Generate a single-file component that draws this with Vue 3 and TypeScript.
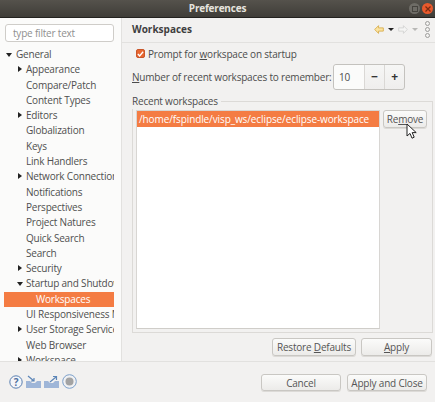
<template>
  <div class="window">
    <header class="titlebar">
      <span class="title">Preferences</span>
      <span class="win-btn max"><i></i></span>
      <span class="win-btn close">
        <svg width="8" height="8" viewBox="0 0 8 8"><path d="M1.5 1.5l5 5M6.5 1.5l-5 5" stroke="#7a2a10" stroke-width="1.2" /></svg>
      </span>
    </header>

    <div class="main">
      <aside class="sidebar">
        <div class="filter">type filter text</div>
        <div class="tree">
          <div
            v-for="item in tree"
            :key="item.label"
            :class="['row', { selected: item.selected }]"
            :style="{ paddingLeft: item.indent + 'px' }"
          >
            <span v-if="item.arrow === 'right'" class="arrow-right"></span>
            <span v-if="item.arrow === 'down'" class="arrow-down"></span>
            {{ item.label }}
          </div>
        </div>
      </aside>

      <section class="content">
        <div class="head">
          <h1>Workspaces</h1>
          <div class="nav">
            <svg width="10" height="9" viewBox="0 0 11 10">
              <path d="M.7 5L5 .7v2.500h5.300v3.600H5v2.500z" fill="#fbe3a0" stroke="#d9ae4c" />
            </svg>
            <span class="caret dark"></span>
            <svg width="10" height="9" viewBox="0 0 11 10">
              <path d="M10.300 5L6 .7v2.500H.7v3.600H6v2.500z" fill="#f4f4f3" stroke="#d4d4d2" />
            </svg>
            <span class="caret"></span>
            <span class="dots"><i></i><i></i><i></i></span>
          </div>
        </div>

        <div class="body">
          <label class="check-row">
            <span class="check">
              <svg width="8" height="8" viewBox="0 0 8 8"><path d="M1 4l2 2.200L7 1.400" fill="none" stroke="#fff" stroke-width="1.500" /></svg>
            </span>
            <span>Prompt for <u>w</u>orkspace on startup</span>
          </label>

          <div class="count-row">
            <span><u>N</u>umber of recent workspaces to remember:</span>
            <div class="spinner">
              <span class="value">10</span>
              <span class="step">−</span>
              <span class="step">+</span>
            </div>
          </div>

          <div class="group">
            <div class="legend">Recent workspaces</div>
            <div class="list">
              <div class="list-item">/home/fspindle/visp_ws/eclipse/eclipse-workspace</div>
            </div>
            <div class="side">
              <button type="button" class="btn remove">Re<u>m</u>ove</button>
              <svg class="cursor" width="12" height="17" viewBox="0 0 12 17">
                <path d="M1 1v12l3-2.600 2 4.800 2.200-1-2-4.600h4z" fill="#fff" stroke="#222" stroke-width="1" />
              </svg>
            </div>
          </div>

          <div class="page-actions">
            <button type="button" class="btn restore">Restore <u>D</u>efaults</button>
            <button type="button" class="btn apply"><u>A</u>pply</button>
          </div>
        </div>
      </section>
    </div>

    <footer class="footer">
      <div class="icons">
        <svg width="14" height="14" viewBox="0 0 14 14">
          <circle cx="7" cy="7" r="6.200" fill="#f4f6fa" stroke="#5a7fb0" />
          <text x="7" y="10.500" text-anchor="middle" class="q">?</text>
        </svg>
        <svg width="15" height="13" viewBox="0 0 15 13">
          <path d="M0 6h4l2 2h3l2-2h4v7H0z" fill="#9fb6d8" />
          <path d="M2 1l6 5M8 3v3H5" fill="none" stroke="#5d86b8" stroke-width="1.200" />
        </svg>
        <svg width="15" height="13" viewBox="0 0 15 13">
          <path d="M0 6h4l2 2h3l2-2h4v7H0z" fill="#9fb6d8" />
          <path d="M6 7l6-5M9 1.500h3.500V5" fill="none" stroke="#5d86b8" stroke-width="1.200" />
        </svg>
        <svg width="15" height="15" viewBox="0 0 15 15">
          <circle cx="7.500" cy="7.500" r="6.800" fill="#f0f1f3" stroke="#7b9fca" />
          <circle cx="7.500" cy="7.500" r="4" fill="#a3a3a3" />
        </svg>
      </div>
      <button type="button" class="btn cancel">Cancel</button>
      <button type="button" class="btn close-btn">Apply and Close</button>
    </footer>
  </div>
</template>

<script setup lang="ts">
type TreeItem = {
  label: string
  indent: number
  arrow?: 'right' | 'down'
  selected?: boolean
}

const tree: TreeItem[] = [
  { label: 'General', indent: 16, arrow: 'down' },
  { label: 'Appearance', indent: 26, arrow: 'right' },
  { label: 'Compare/Patch', indent: 26 },
  { label: 'Content Types', indent: 26 },
  { label: 'Editors', indent: 26, arrow: 'right' },
  { label: 'Globalization', indent: 26 },
  { label: 'Keys', indent: 26 },
  { label: 'Link Handlers', indent: 26 },
  { label: 'Network Connections', indent: 26, arrow: 'right' },
  { label: 'Notifications', indent: 26 },
  { label: 'Perspectives', indent: 26 },
  { label: 'Project Natures', indent: 26 },
  { label: 'Quick Search', indent: 26 },
  { label: 'Search', indent: 26 },
  { label: 'Security', indent: 26, arrow: 'right' },
  { label: 'Startup and Shutdown', indent: 26, arrow: 'down' },
  { label: 'Workspaces', indent: 36, selected: true },
  { label: 'UI Responsiveness Monitoring', indent: 26 },
  { label: 'User Storage Service', indent: 26, arrow: 'right' },
  { label: 'Web Browser', indent: 26 },
  { label: 'Workspace', indent: 26, arrow: 'right' },
]
</script>

<style>
html,
body {
  margin: 0;
  background: #f2f1f0;
}
</style>

<style scoped>
.window {
  width: 435px;
  height: 402px;
  display: flex;
  flex-direction: column;
  overflow: hidden;
  background: #f2f1f0;
  color: #4c4c4c;
  font-family: "Open Sans", "Noto Sans", sans-serif;
  font-size: 10px;
  letter-spacing: -0.2px;
}

.titlebar {
  height: 17px;
  flex: none;
  display: flex;
  align-items: center;
  justify-content: flex-end;
  gap: 2px;
  padding-right: 2px;
  position: relative;
  background: linear-gradient(#55524c, #3f3d38);
  border-bottom: 1px solid #23221f;
}

.title {
  position: absolute;
  left: 0;
  right: 0;
  top: 1px;
  text-align: center;
  color: #e6e4df;
  font-weight: 700;
  font-size: 10px;
}

.win-btn {
  width: 11px;
  height: 11px;
  border-radius: 50%;
  display: flex;
  align-items: center;
  justify-content: center;
  position: relative;
}

.win-btn.max {
  background: #6e6c66;
}

.win-btn.max i {
  width: 4px;
  height: 4px;
  border: 1px solid #45433e;
}

.win-btn.close {
  background: #e9592c;
}

.main {
  flex: 1;
  min-height: 0;
  display: flex;
  border-bottom: 1px solid #e2e1df;
}

.sidebar {
  width: 121px;
  flex: none;
  display: flex;
  flex-direction: column;
  background: #fbfbfa;
  border-right: 1px solid #e2e1df;
  overflow: hidden;
}

.filter {
  height: 16px;
  margin: 6px 7px 0 5px;
  padding-left: 7px;
  line-height: 16px;
  border: 1px solid #cfcdc9;
  border-radius: 3px;
  background: #fff;
  color: #8f8f8f;
}

.tree {
  margin-top: 4px;
  width: 114px;
  overflow: hidden;
  padding-top: 1px;
}

.row {
  height: 15.3px;
  line-height: 15.3px;
  position: relative;
  white-space: nowrap;
  box-sizing: border-box;
  color: #4f4f4f;
}

.row.selected {
  margin-left: 4px;
  padding-left: 32px !important;
  background: #f47c43;
  color: #fff;
}

.arrow-right {
  position: absolute;
  left: 18px;
  top: 4px;
  border-left: 4px solid #222;
  border-top: 3.500px solid transparent;
  border-bottom: 3.500px solid transparent;
}

.arrow-down {
  position: absolute;
  top: 6px;
  left: 6px;
  border-top: 4px solid #222;
  border-left: 3.500px solid transparent;
  border-right: 3.500px solid transparent;
}

.row:not(:first-child) .arrow-down {
  left: 17px;
}

.content {
  flex: 1;
  min-width: 0;
  display: flex;
  flex-direction: column;
}

.head {
  height: 25px;
  flex: none;
  display: flex;
  align-items: center;
  justify-content: space-between;
  padding: 0 5px 2px 10px;
  box-sizing: border-box;
  border-bottom: 1px solid #e2e1df;
}

.head h1 {
  margin: 0;
  font-size: 10px;
  font-weight: 700;
  color: #3f3f3f;
  letter-spacing: 0;
}

.nav {
  display: flex;
  align-items: center;
  gap: 4px;
  margin-top: 1px;
}

.caret {
  border-top: 3px solid #b8b8b6;
  border-left: 3px solid transparent;
  border-right: 3px solid transparent;
}

.caret.dark {
  border-top-color: #222;
}

.dots {
  display: flex;
  flex-direction: column;
  gap: 1px;
  margin-left: 3px;
}

.dots i {
  width: 3px;
  height: 3px;
  border: 1px solid #9d9d9b;
  border-radius: 50%;
}

.body {
  flex: 1;
  min-height: 0;
  display: flex;
  flex-direction: column;
  padding: 3px 2px 5px 10px;
}

.check-row {
  display: flex;
  align-items: center;
  height: 15px;
  padding-left: 4px;
  gap: 3px;
  white-space: nowrap;
}

.check {
  width: 9px;
  height: 9px;
  display: flex;
  align-items: center;
  justify-content: center;
  background: #e8662f;
  border: 1px solid #c9562a;
  border-radius: 2px;
  box-sizing: border-box;
}

.count-row {
  display: flex;
  align-items: center;
  justify-content: space-between;
  margin-top: 3px;
  height: 26px;
  padding-right: 28px;
  white-space: nowrap;
}

.spinner {
  width: 72px;
  height: 26px;
  flex: none;
  display: flex;
  box-sizing: border-box;
  border: 1px solid #c4c2be;
  border-radius: 3px;
  background: linear-gradient(#f6f6f5, #efeeed);
}

.spinner .value {
  flex: 1;
  padding-left: 5px;
  line-height: 24px;
  background: #fbfbfa;
  border-radius: 3px 0 0 3px;
}

.spinner .step {
  width: 19px;
  text-align: center;
  line-height: 23px;
  font-size: 12px;
  font-weight: 700;
  color: #333;
  border-left: 1px solid #dad8d5;
}

.group {
  flex: 1;
  min-height: 0;
  display: flex;
  gap: 3px;
  margin-top: 11px;
  padding: 8px 4px 3px 3px;
  position: relative;
  border: 1px solid #dcdad7;
}

.legend {
  position: absolute;
  left: -1px;
  top: -8px;
  height: 15px;
  line-height: 15px;
  padding-right: 3px;
  background: #f2f1f0;
}

.list {
  flex: 1;
  min-width: 0;
  background: #fff;
  border: 1px solid #d8d6d3;
  border-bottom-color: #cfcdc9;
}

.list-item {
  height: 16px;
  line-height: 16px;
  padding-left: 2px;
  background: #f47c43;
  color: #fff;
  white-space: nowrap;
  overflow: hidden;
  letter-spacing: -0.1px;
}

.side {
  width: 45px;
  flex: none;
  position: relative;
}

.btn {
  height: 18px;
  padding: 0;
  box-sizing: border-box;
  font: inherit;
  letter-spacing: inherit;
  color: #555;
  white-space: nowrap;
  border: 1px solid #c9c7c3;
  border-radius: 3px;
  background: linear-gradient(#fbfbfa, #ecebe9);
  box-shadow: 0 1px 0 #dcdad7;
}

.remove {
  width: 44px;
}

.cursor {
  position: absolute;
  left: 23px;
  top: 13px;
}

.page-actions {
  display: flex;
  justify-content: flex-end;
  gap: 5px;
  margin-top: 5px;
  padding-right: 1px;
}

.restore {
  width: 84px;
}

.apply {
  width: 71px;
}

.footer {
  height: 40px;
  flex: none;
  display: flex;
  align-items: center;
  padding: 0 8px 0 9px;
  gap: 6px;
}

.icons {
  display: flex;
  align-items: center;
  gap: 3px;
  margin-right: auto;
  margin-top: -1px;
}

.q {
  font-size: 10px;
  font-weight: 700;
  fill: #4f6f9e;
}

.cancel,
.close-btn {
  width: 80px;
  height: 17px;
  margin-top: 1px;
}
</style>
